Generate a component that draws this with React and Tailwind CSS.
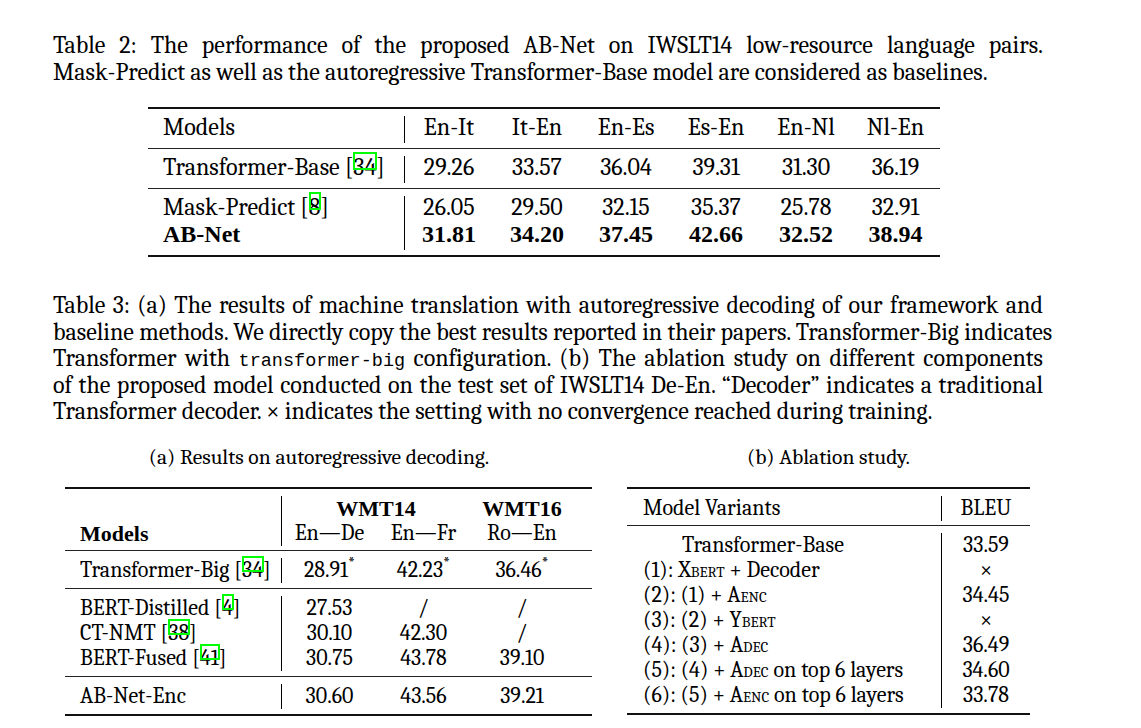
const boldSerif = "font-bold font-['Liberation_Serif','Times_New_Roman',serif]";

function Cite({ n }) {
  return (
    <span className="relative">
      {n}
      <span className="absolute left-0 right-[-1px] top-[-0.04em] h-[0.74em] border-2 border-[#00ff00]" />
    </span>
  );
}

function Line({ children, last }) {
  return (
    <div
      className={
        last
          ? "whitespace-nowrap"
          : "whitespace-nowrap text-justify [text-align-last:justify]"
      }
    >
      {children}
    </div>
  );
}

function Rule({ thick }) {
  return <div className={thick ? "h-[2px] bg-[#111]" : "h-px bg-[#222]"} />;
}

function Row2({ label, vals, bold }) {
  return (
    <div className="grid grid-cols-[257px_88px_88px_90px_90px_90px_89px] h-[27px] leading-[23px]">
      <div className={`border-r border-black pl-[15px] ${bold ? boldSerif : ""}`}>{label}</div>
      {vals.map((v, i) => (
        <div key={i} className={`text-center ${bold ? boldSerif : ""}`}>
          {v}
        </div>
      ))}
    </div>
  );
}

function Row3a({ label, vals, bold }) {
  return (
    <div className="grid grid-cols-[217px_95px_93px_104px] h-[25px] leading-[25px]">
      <div className={`border-r border-black pl-[15px] ${bold ? boldSerif : ""}`}>{label}</div>
      {vals.map((v, i) => (
        <div key={i} className="text-center">
          {v}
        </div>
      ))}
    </div>
  );
}

function Row3b({ label, val, indent }) {
  return (
    <div className="grid grid-cols-[315px_88px] h-[25px] leading-[25px]">
      <div className={`border-r border-black ${indent ? "pl-[55px]" : "pl-[16px]"}`}>{label}</div>
      <div className="text-center">{val}</div>
    </div>
  );
}

const Sc = ({ children }) => <span className="[font-variant:small-caps]">{children}</span>;
const Star = () => <sup>*</sup>;

function Table2() {
  return (
    <div className="ml-[95px] mt-[21px] w-[792px] text-[24px]">
      <Rule thick />
      <div className="pt-[7px] pb-[5px]">
        <Row2 label="Models" vals={["En-It", "It-En", "En-Es", "Es-En", "En-Nl", "Nl-En"]} />
      </div>
      <Rule />
      <div className="pt-[7px] pb-[5px]">
        <Row2
          label={<>Transformer-Base [<Cite n="34" />]</>}
          vals={["29.26", "33.57", "36.04", "39.31", "31.30", "36.19"]}
        />
      </div>
      <Rule />
      <div className="pt-[7px] pb-[5px]">
        <Row2
          label={<>Mask-Predict [<Cite n="8" />]</>}
          vals={["26.05", "29.50", "32.15", "35.37", "25.78", "32.91"]}
        />
        <Row2 bold label="AB-Net" vals={["31.81", "34.20", "37.45", "42.66", "32.52", "38.94"]} />
      </div>
      <Rule thick />
    </div>
  );
}

function Table3a() {
  return (
    <div className="w-[527px]">
      <div className="pr-[19px] text-center text-[21.5px] leading-[25px]">
        (a) Results on autoregressive decoding.
      </div>
      <div className="mt-[17px] text-[22px]">
        <Rule thick />
        <div className="pt-[7px] pb-[4px] pr-[18px]">
          <div className={`grid grid-cols-[217px_188px_104px] h-[25px] leading-[25px] ${boldSerif}`}>
            <div className="border-r border-black" />
            <div className="text-center">WMT14</div>
            <div className="text-center">WMT16</div>
          </div>
          <Row3a bold label="Models" vals={["En—De", "En—Fr", "Ro—En"]} />
        </div>
        <Rule />
        <div className="pt-[7px] pb-[5px]">
          <Row3a
            label={<>Transformer-Big [<Cite n="34" />]</>}
            vals={[
              <>28.91<Star /></>,
              <>42.23<Star /></>,
              <>36.46<Star /></>,
            ]}
          />
        </div>
        <Rule />
        <div className="pt-[7px] pb-[5px]">
          <Row3a label={<>BERT-Distilled [<Cite n="4" />]</>} vals={["27.53", "/", "/"]} />
          <Row3a label={<>CT-NMT [<Cite n="38" />]</>} vals={["30.10", "42.30", "/"]} />
          <Row3a label={<>BERT-Fused [<Cite n="41" />]</>} vals={["30.75", "43.78", "39.10"]} />
        </div>
        <Rule />
        <div className="pt-[7px] pb-[5px]">
          <Row3a label="AB-Net-Enc" vals={["30.60", "43.56", "39.21"]} />
        </div>
        <Rule thick />
      </div>
    </div>
  );
}

function Table3b() {
  return (
    <div className="w-[403px]">
      <div className="text-center text-[21.5px] leading-[25px]">(b) Ablation study.</div>
      <div className="mt-[17px] text-[22px]">
        <Rule thick />
        <div className="pt-[7px] pb-[4px]">
          <Row3b label="Model Variants" val="BLEU" />
        </div>
        <Rule />
        <div className="pt-[7px] pb-[5px]">
          <Row3b indent label="Transformer-Base" val="33.59" />
          <Row3b label={<>(1): <Sc>Xbert</Sc> + Decoder</>} val="×" />
          <Row3b label={<>(2): (1) + <Sc>Aenc</Sc></>} val="34.45" />
          <Row3b label={<>(3): (2) + <Sc>Ybert</Sc></>} val="×" />
          <Row3b label={<>(4): (3) + <Sc>Adec</Sc></>} val="36.49" />
          <Row3b label={<>(5): (4) + <Sc>Adec</Sc> on top 6 layers</>} val="34.60" />
          <Row3b label={<>(6): (5) + <Sc>Aenc</Sc> on top 6 layers</>} val="33.78" />
        </div>
        <Rule thick />
      </div>
    </div>
  );
}

export default function App() {
  return (
    <div className="min-h-[728px] w-[1141px] bg-white font-serif text-black">
      <div className="pl-[53px] pt-[32px]">
        <div className="w-[990px] text-[24px] leading-[27px]">
          <Line>Table 2: The performance of the proposed AB-Net on IWSLT14 low-resource language pairs.</Line>
          <Line last>
            Mask-Predict as well as the autoregressive Transformer-Base model are considered as baselines.
          </Line>
        </div>

        <Table2 />

        <div className="mt-[35px] w-[990px] text-[24px] leading-[26.5px]">
          <Line>
            Table 3: (a) The results of machine translation with autoregressive decoding of our framework and
          </Line>
          <Line>
            baseline methods. We directly copy the best results reported in their papers. Transformer-Big indicates
          </Line>
          <Line>
            Transformer with{" "}
            <span className="font-['Liberation_Mono','Courier_New',monospace] text-[18.5px] leading-none">
              transformer-big
            </span>{" "}
            configuration. (b) The ablation study on different components
          </Line>
          <Line>
            of the proposed model conducted on the test set of IWSLT14 De-En. “Decoder” indicates a traditional
          </Line>
          <Line last>
            Transformer decoder. × indicates the setting with no convergence reached during training.
          </Line>
        </div>
      </div>

      <div className="mt-[20px] flex gap-[35px] pl-[65px]">
        <Table3a />
        <Table3b />
      </div>
    </div>
  );
}
